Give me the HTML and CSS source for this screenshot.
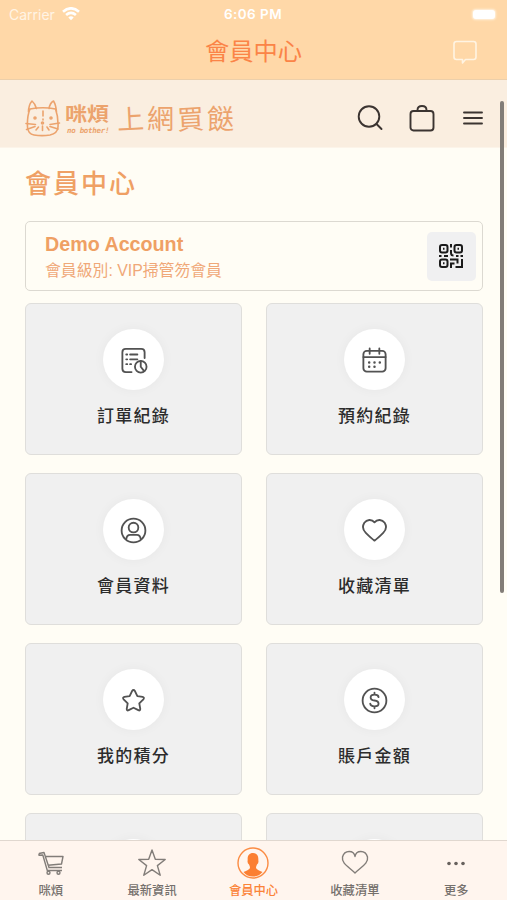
FILE: index.html
```html
<!DOCTYPE html>
<html lang="zh-Hant">
<head>
<meta charset="utf-8">
<meta name="viewport" content="width=device-width, initial-scale=1">
<title>會員中心</title>
<link rel="stylesheet" href="styles.css">
</head>
<body>
<div class="app">
  <header class="topbar">
    <div class="status">
      <div class="carrier"><span>Carrier</span>
        <svg width="18" height="14" viewBox="0 0 18 14" fill="none" stroke="#fff" stroke-width="2.7"><path d="M1 4.7Q9-2 17 4.7M4.1 8Q9 3.9 13.9 8"/><path d="M6.3 10.4Q9 8 11.7 10.4L9 13.2Z" fill="#fff" stroke="none"/></svg>
      </div>
      <span class="time">6:06 PM</span>
      <span class="battery"></span>
    </div>
    <div class="nav">
      <span></span>
      <h1>會員中心</h1>
      <svg class="chat" width="26" height="26" viewBox="0 0 26 26" fill="none" stroke="#fff4e3" stroke-width="1.6" stroke-linejoin="round"><path d="M4.5 2.5H21.5Q24 2.5 24 5V18Q24 20.5 21.5 20.5H13.5L10.5 24V20.5H4.5Q2 20.5 2 18V5Q2 2.5 4.5 2.5Z"/></svg>
    </div>
  </header>

  <div class="store">
    <div class="logo">
      <svg width="36" height="38" viewBox="0 0 36 38" fill="none" stroke="#eca36d" stroke-width="1.6" stroke-linecap="round" stroke-linejoin="round"><path d="M3.500 13Q3.500 6 7 2Q10 4.500 11.500 9.500M24 9.500Q25 4 28.500 2Q31 6 31.500 13M5 10Q18 7.500 30.500 10Q33.500 18 33 28Q32.500 34.500 25 36Q17 37.300 9 36Q3 35 2.500 28Q2 17 5 10Z"/><path d="M18 12V17M18 20V21M17.500 27V31.500M1 24.500L10.500 25.500M1.500 30.500L10 27.500M25 25.500L34.500 24M25 27.500L33 30M13.500 28L11 31M22 28L24 31"/><circle cx="10" cy="19" r="1"/><circle cx="26" cy="19" r="1"/><circle cx="17.500" cy="24" r="1"/></svg>
      <div class="brand"><b>咪煩</b><small>no bother!</small></div>
      <span class="slogan"><i>上</i><i>網</i><i>買</i><i>餸</i></span>
    </div>
    <div class="tools">
      <svg width="28" height="28" viewBox="0 0 28 28" fill="none" stroke="#3b3431" stroke-width="1.9" stroke-linecap="round"><circle cx="13" cy="12.500" r="10.300"/><path d="M20.500 20L25.500 25"/></svg>
      <svg width="28" height="30" viewBox="0 0 28 30" fill="none" stroke="#3b3431" stroke-width="1.9"><rect x="2.500" y="8" width="23" height="19.500" rx="3"/><path d="M9.500 8V7Q9.500 3 14 3Q18.500 3 18.500 7V8"/></svg>
      <svg width="28" height="18" viewBox="0 0 28 18" stroke="#3b3431" stroke-width="1.9" stroke-linecap="round"><path d="M5 3.500H23M5 9H23M5 14.500H23"/></svg>
    </div>
  </div>

  <main class="content">
    <h2>會員中心</h2>
    <section class="account">
      <div><strong>Demo Account</strong><p>會員級別: VIP掃管笏會員</p></div>
      <span class="qr"><svg width="26" height="26" viewBox="0 0 26 26" fill="none" stroke="#1b1b1b" stroke-width="2"><rect x="2" y="2" width="7.500" height="7.500" rx="2"/><rect x="16.500" y="2" width="7.500" height="7.500" rx="2"/><rect x="2" y="16.500" width="7.500" height="7.500" rx="2"/><path d="M5 5.750H6.500M19.500 5.750H21M5 20.250H6.500M13 1V4.500M13 7V10Q13 12.500 15.500 12.500M1 13H3.500M6 13H10M18 13H20.500M22.500 13H25M12 16.500H20.500M13 25V20.500H16.500M19.500 16V20.500M24 16V24H17.500"/></svg></span>
    </section>
    <div class="grid">
      <a class="card"><span class="disc"><svg width="30" height="30" viewBox="0 0 30 30"><path d="M13 27H7Q3.500 27 3.500 23.500V6.500Q3.500 3 7 3H23Q26.500 3 26.500 6.500V12.500M11.500 8.800H19M11.500 13.800H19M7.500 8.800H8.500M7.500 13.800H8.500M7.500 18.800H8.500M11.500 18.800H12.500"/><circle cx="22.500" cy="21.500" r="6"/><path d="M22.500 15.500V21.500L26 26"/></svg></span><span>訂單紀錄</span></a>
      <a class="card"><span class="disc"><svg width="30" height="30" viewBox="0 0 30 30"><rect x="3.500" y="5" width="23" height="21.500" rx="3.500"/><path d="M3.500 11.500H26.500M10 2.500V8M20 2.500V8"/><path class="dots" d="M9.500 17H9.510M15 17H15.010M20.500 17H20.510M9.500 21.500H9.510M15 21.500H15.010"/></svg></span><span>預約紀錄</span></a>
      <a class="card"><span class="disc"><svg width="30" height="30" viewBox="0 0 30 30"><circle cx="15" cy="15" r="12.300"/><circle cx="15" cy="12" r="5"/><path d="M7.500 24Q8 19.500 11.500 19.500H18.500Q22 19.500 22.500 24"/></svg></span><span>會員資料</span></a>
      <a class="card"><span class="disc"><svg width="30" height="30" viewBox="0 0 30 30"><path d="M15 6.500C18 3 23 3.500 25.500 7C28 11 26.500 15 24 17.500C21.500 20 18 23.500 15 25.500C12 23.500 8.500 20 6 17.500C3.500 15 2 11 4.500 7C7 3.500 12 3 15 6.500Z"/></svg></span><span>收藏清單</span></a>
      <a class="card"><span class="disc"><svg width="30" height="30" viewBox="0 0 30 30"><path d="M13.500 5.200Q15 3 16.500 5.200L19 10.500L24.500 11.300Q26.700 12 25.200 13.800L21 18L22 23.700Q22 26 20 25L15 22.500L10 25Q8 26 8 23.700L9 18L4.800 13.800Q3.300 12 5.500 11.300L11 10.500Z"/></svg></span><span>我的積分</span></a>
      <a class="card"><span class="disc"><svg width="30" height="30" viewBox="0 0 30 30"><circle cx="15" cy="15" r="12.300"/><path d="M19.200 11.500Q19 9 15 9Q11 9 11 11.800Q11 14.500 15 15Q19.200 15.500 19.200 18.300Q19.200 21 15 21Q10.800 21 10.600 18.300M15 7V9M15 21V23"/></svg></span><span>賬戶金額</span></a>
      <a class="card"><span class="disc"></span></a>
      <a class="card"><span class="disc"></span></a>
    </div>
  </main>

  <nav class="tabs">
    <a><svg width="32" height="32" viewBox="0 0 32 32"><path d="M4 6.500L9 5.500L14 20.500H27M4 6.500V8.200L7.800 8L12.300 23.500H27M10 9.500H28L26.500 17L13 18.300M13.300 20.500H27"/><circle cx="13.500" cy="25.800" r="1.500"/><circle cx="23.500" cy="25.800" r="1.500"/></svg><span>咪煩</span></a>
    <a><svg width="32" height="32" viewBox="0 0 32 32"><path d="M16 3L19.300 12.300L29.200 12.500L21.400 18.600L24.200 28.300L16 22.600L7.800 28.300L10.600 18.600L2.800 12.500L12.700 12.300Z"/></svg><span>最新資訊</span></a>
    <a class="active"><svg width="32" height="32" viewBox="0 0 32 32"><circle cx="16" cy="16" r="15"/><path d="M16 6C20 6 21.700 9 21.300 13Q22 16 20 17.500Q19 19 19 21Q20 23 25.500 25Q22 29.500 16 29.500Q10 29.500 6.500 25Q12 23 13 21Q13 19 12 17.500Q10 16 10.700 13C10.300 9 12 6 16 6Z" fill="#fb7f32" stroke="none"/></svg><span>會員中心</span></a>
    <a><svg width="32" height="32" viewBox="0 0 32 32"><path d="M16 9.500C17 3 26.500 2.500 28.500 10C29.700 16.500 22 20 16 26C10 20 2.300 16.500 3.500 10C5.500 2.500 15 3 16 9.500Z"/></svg><span>收藏清單</span></a>
    <a><svg width="32" height="32" viewBox="0 0 32 32"><g fill="#67615d" stroke="none"><circle cx="9" cy="16.500" r="1.800"/><circle cx="16" cy="16.500" r="1.800"/><circle cx="23" cy="16.500" r="1.800"/></g></svg><span>更多</span></a>
  </nav>
  <div class="scrollbar"></div>
</div>
</body>
</html>
```

FILE: styles.css
```css
* { box-sizing: border-box; }
body { margin: 0; font-family: "Liberation Sans", "Noto Sans CJK TC", sans-serif; }
h1, h2, p { margin: 0; }
svg { display: block; flex: none; }
.app { position: relative; display: flex; flex-direction: column; width: 507px; height: 900px; overflow: hidden; background: #fffdf5; }

.topbar { height: 80px; flex: none; background: #ffd8a8; border-bottom: 1px solid #eccfaa; }
.status { display: grid; grid-template-columns: 1fr auto 1fr; align-items: center; height: 27px; padding: 0 12px 0 9px; color: #fff; font: 14px/27px Inter, sans-serif; }
.carrier { display: flex; align-items: center; gap: 7px; color: #fff4e5; font-size: 14px; }
.time { padding: 1px 0 0 2px; font-weight: 600; font-size: 13.5px; letter-spacing: .45px; }
.battery { justify-self: end; width: 22px; height: 9px; border-radius: 3px; background: #fff; box-shadow: 0 0 2px 1px #fff1dd; }
.nav { display: grid; grid-template-columns: 1fr auto 1fr; align-items: center; height: 50px; padding: 0 29px; }
.nav h1 { font-size: 24.3px; line-height: 50px; font-weight: 400; color: #fb8447; }
.chat { justify-self: end; }

.store { display: flex; justify-content: space-between; align-items: center; height: 68px; flex: none; padding: 8px 20px 0 25px; background: #faeee0; border-bottom: 1px solid #fcf4e9; }
.logo { display: flex; align-items: center; color: #eca36d; }
.brand { display: flex; flex-direction: column; width: 47px; margin-left: 4px; padding-top: 4px; }
.brand b { font-size: 22px; line-height: 22px; font-weight: 700; white-space: nowrap; transform: scaleY(.88); }
.brand small { padding-left: 2px; font: italic 700 7.500px/9px "DejaVu Sans Mono", monospace; white-space: nowrap; letter-spacing: -.3px; }
.slogan { display: flex; gap: 4px; margin-left: 5px; padding-top: 4px; font-size: 27px; line-height: 34px; }
.slogan i { width: 26px; font-style: normal; }
.slogan i:nth-child(odd) { transform: rotate(-3deg); }
.tools { display: flex; align-items: center; gap: 23.300px; }

.content { flex: 1; min-height: 0; overflow: hidden; padding: 16px 24px 0 25px; }
h2 { font-size: 26px; line-height: 40px; font-weight: 500; letter-spacing: 2px; color: #efa064; }
.account { display: flex; justify-content: space-between; align-items: center; height: 70px; margin-top: 17px; padding: 0 6px 0 19px; border: 1px solid #dcd9d1; border-radius: 5px; color: #efa064; }
.account div { padding-top: 3px; }
.account strong { display: block; font-size: 19.700px; line-height: 24px; }
.account p { margin-top: 3px; font-size: 15.850px; line-height: 24px; color: #f0a878; }
.qr { display: grid; place-items: center; width: 49px; height: 49px; padding-right: 1px; border-radius: 5px; background: #f0f0f1; }
.grid { display: grid; grid-template-columns: 217px 217px; justify-content: space-between; gap: 18px 0; margin-top: 12px; }
.card { display: flex; flex-direction: column; align-items: center; height: 152px; padding-top: 25px; border: 1px solid #dfdedb; border-radius: 6px; background: #f0f0f0; color: #2c2c2c; font-size: 17px; line-height: 26px; font-weight: 500; letter-spacing: 1.200px; }
.disc { display: grid; place-items: center; width: 61px; height: 61px; flex: none; margin-bottom: 14px; border-radius: 50%; background: #fff; box-shadow: 0 0 12px rgba(0,0,0,.045); }
.disc svg { width: 29px; height: 29px; margin-top: 1px; fill: none; stroke: #525252; stroke-width: 1.900; stroke-linecap: round; stroke-linejoin: round; }
.disc .dots { stroke-width: 2.600; }

.tabs { display: grid; grid-template-columns: repeat(5, 1fr); height: 60px; flex: none; border-top: 1px solid #e0d7cf; background: #fff5ee; }
.tabs a { display: flex; flex-direction: column; align-items: center; padding-top: 6px; color: #75706c; font-size: 12.300px; line-height: 18px; font-weight: 500; }
.tabs a span { margin-top: 3px; }
.tabs svg { fill: none; stroke: #827d79; stroke-width: 1.400; stroke-linejoin: round; }
.tabs .active { color: #fb8338; }
.tabs .active svg { stroke: #fb8b43; }
.scrollbar { position: absolute; right: 3.500px; top: 101px; width: 4px; height: 492px; border-radius: 2px; background: #827d78; }
```
